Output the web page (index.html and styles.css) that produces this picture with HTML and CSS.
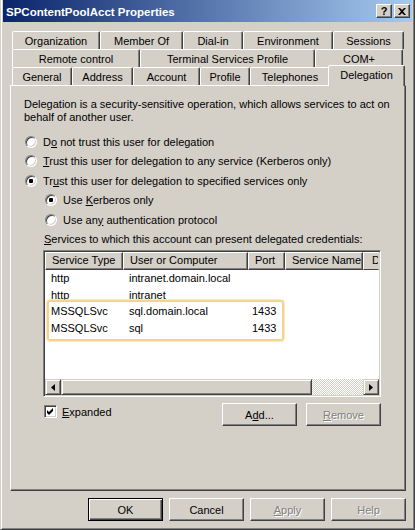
FILE: index.html
```html
<!DOCTYPE html>
<html>
<head>
<meta charset="utf-8">
<title>SPContentPoolAcct Properties</title>
<link rel="stylesheet" href="styles.css">
</head>
<body>
<div class="window">
  <div class="titlebar">
    <span class="title">SPContentPoolAcct Properties</span>
    <span class="caption-btns">
      <span class="cbtn">?</span>
      <span class="cbtn"><svg width="8" height="7" viewBox="0 0 8 7"><path d="M0 0h2l2 2 2-2h2L5 3.5 8 7H6L4 5 2 7H0l3-3.5z" fill="#000"/></svg></span>
    </span>
  </div>
  <div class="client">
    <div class="tabs">
      <div class="tabrow row1">
        <div class="tab">Organization</div>
        <div class="tab">Member Of</div>
        <div class="tab">Dial-in</div>
        <div class="tab">Environment</div>
        <div class="tab">Sessions</div>
      </div>
      <div class="tabrow row2">
        <div class="tab">Remote control</div>
        <div class="tab">Terminal Services Profile</div>
        <div class="tab">COM+</div>
      </div>
      <div class="tabrow row3">
        <div class="tab">General</div>
        <div class="tab">Address</div>
        <div class="tab">Account</div>
        <div class="tab">Profile</div>
        <div class="tab">Telephones</div>
        <div class="tab selected">Delegation</div>
      </div>
    </div>
    <div class="page">
      <p class="intro">Delegation is a security-sensitive operation, which allows services to act on behalf of another user.</p>
      <div class="options">
        <div class="opt"><span class="radio"></span><span>D<u>o</u> not trust this user for delegation</span></div>
        <div class="opt"><span class="radio"></span><span><u>T</u>rust this user for delegation to any service (Kerberos only)</span></div>
        <div class="opt"><span class="radio on"></span><span>Tr<u>u</u>st this user for delegation to specified services only</span></div>
        <div class="opt sub"><span class="radio on"></span><span>Use <u>K</u>erberos only</span></div>
        <div class="opt sub"><span class="radio"></span><span>Use an<u>y</u> authentication protocol</span></div>
      </div>
      <div class="svc-label"><u>S</u>ervices to which this account can present delegated credentials:</div>
      <div class="listbox">
        <div class="lv-header">
          <div class="hcell">Service Type</div>
          <div class="hcell">User or Computer</div>
          <div class="hcell">Port</div>
          <div class="hcell">Service Name</div>
          <div class="hcell last">D</div>
        </div>
        <div class="lv-body">
          <div class="lv-row"><span>http</span><span>intranet.domain.local</span><span></span><span></span><span></span></div>
          <div class="lv-row"><span>http</span><span>intranet</span><span></span><span></span><span></span></div>
          <div class="lv-row"><span>MSSQLSvc</span><span>sql.domain.local</span><span class="num">1433</span><span></span><span></span></div>
          <div class="lv-row"><span>MSSQLSvc</span><span>sql</span><span class="num">1433</span><span></span><span></span></div>
          <div class="highlight"></div>
        </div>
        <div class="hscroll">
          <div class="sb-btn"><svg width="4" height="7" viewBox="0 0 4 7"><path d="M4 0v7L0 3.5z" fill="#000"/></svg></div>
          <div class="sb-thumb"></div>
          <div class="sb-track"></div>
          <div class="sb-btn"><svg width="4" height="7" viewBox="0 0 4 7"><path d="M0 0v7l4-3.5z" fill="#000"/></svg></div>
        </div>
      </div>
      <div class="below-list">
        <div class="check"><span class="checkbox"><svg width="7" height="7" viewBox="0 0 7 7"><path d="M0 2l2 2 4-4v3L2 7 0 5z" fill="#000"/></svg></span><span><u>E</u>xpanded</span></div>
        <div class="actions">
          <span class="btn">A<u>d</u>d...</span>
          <span class="btn disabled"><u>R</u>emove</span>
        </div>
      </div>
    </div>
    <div class="buttons">
      <span class="btn default">OK</span>
      <span class="btn">Cancel</span>
      <span class="btn disabled"><u>A</u>pply</span>
      <span class="btn disabled">Help</span>
    </div>
  </div>
</div>
</body>
</html>
```

FILE: styles.css
```css
* { box-sizing: border-box; }
html, body { margin: 0; padding: 0; }
body {
  width: 415px;
  height: 530px;
  overflow: hidden;
  background: #d4d0c8;
  font-family: "Liberation Sans", Arial, sans-serif;
  font-size: 11px;
  color: #000;
}
u { text-decoration: underline; text-underline-offset: 1px; }

.window {
  width: 415px;
  height: 530px;
  background: #d4d0c8;
  border-left: 1px solid #d4d0c8;
  border-right: 1px solid #404040;
  border-bottom: 1px solid #404040;
  box-shadow: inset 1px 0 #fff, inset -1px -1px #808080;
  padding: 0 2px 2px 2px;
}

.titlebar {
  height: 22px;
  display: flex;
  align-items: center;
  justify-content: space-between;
  background: linear-gradient(to right, #0a246a, #a6caf0);
  padding: 0 2px 0 3px;
}
.title {
  color: #fff;
  font-weight: bold;
  font-size: 11.5px;
  padding-top: 1px;
  white-space: nowrap;
}
.caption-btns { display: flex; gap: 2px; }
.cbtn {
  width: 16px;
  height: 14px;
  display: flex;
  align-items: center;
  justify-content: center;
  background: #d4d0c8;
  border: 1px solid;
  border-color: #fff #404040 #404040 #fff;
  box-shadow: inset -1px -1px #808080;
  font-weight: bold;
  font-size: 11px;
  line-height: 12px;
}

.client { padding: 0 6px 0 7px; }

.tabs { display: flex; flex-direction: column; margin-top: 9px; }
.tabrow { display: grid; height: 18px; margin-left: 2px; }
.row1 { grid-template-columns: 88px 83px 60px 90px 71px; }
.row2 { grid-template-columns: 128px 175px 88px; }
.row3 { grid-template-columns: 60px 61px 67px 50px 80px 73px; }
.tab {
  background: #d4d0c8;
  border: 1px solid;
  border-bottom: 0;
  border-color: #fff #404040 transparent #fff;
  box-shadow: inset -1px 0 #808080;
  border-radius: 2px 2px 0 0;
  text-align: center;
  padding-top: 2px;
  line-height: 14px;
  white-space: nowrap;
}
.tab.selected {
  margin: -2px -2px -1px -2px;
  z-index: 1;
}

.page {
  height: 406px;
  border: 1px solid;
  border-color: #fff #404040 #404040 #fff;
  box-shadow: inset -1px -1px #808080;
  padding: 12px 10px 0 13px;
}
.intro { margin: 0; line-height: 13px; }

.options { margin-top: 8px; }
.opt { display: flex; align-items: center; height: 19.5px; white-space: nowrap; }
.opt.sub { padding-left: 20px; }
.radio {
  width: 12px;
  height: 12px;
  flex: none;
  margin: 0 6px 0 1px;
  border-radius: 50%;
  background: #fff;
  border: 1px solid;
  border-color: #808080 #fff #fff #808080;
  box-shadow: inset 1px 1px #404040, inset -1px -1px #d4d0c8;
  display: flex;
  align-items: center;
  justify-content: center;
}
.radio.on::after {
  content: "";
  width: 4px;
  height: 4px;
  border-radius: 1px;
  background: #000;
}

.svc-label { margin: 3px 0 0 20px; line-height: 13px; white-space: nowrap; }

.listbox {
  margin: 4.5px 0 0 19px;
  width: 338px;
  height: 147px;
  background: #fff;
  border: 1px solid;
  border-color: #808080 #fff #fff #808080;
  box-shadow: inset 1px 1px #404040, inset -1px -1px #d4d0c8;
  padding: 1px;
  display: flex;
  flex-direction: column;
}
.lv-header {
  display: grid;
  grid-template-columns: 78px 125px 37px 78px 1fr;
  height: 18px;
  flex: none;
  background: #d4d0c8;
}
.hcell {
  border: 1px solid;
  border-color: #fff #404040 #404040 #fff;
  box-shadow: inset -1px -1px #808080;
  padding-left: 6px;
  line-height: 15px;
  white-space: nowrap;
  overflow: hidden;
}
.hcell.last {
  padding-left: 8px;
  border-right-color: #d4d0c8;
  box-shadow: none;
}
.lv-body {
  position: relative;
  height: 109px;
  flex: none;
  overflow: hidden;
}
.lv-row {
  display: grid;
  grid-template-columns: 78px 125px 37px 78px 1fr;
  height: 16.67px;
  line-height: 16.67px;
  white-space: nowrap;
}
.lv-row span { padding-left: 6px; overflow: hidden; }
.lv-row .num { padding-left: 4px; }
.highlight {
  position: absolute;
  left: 2px;
  top: 30px;
  width: 237px;
  height: 41px;
  border: 2px solid #f2d48c;
  border-radius: 3px;
  box-shadow: 0 0 1px 1px rgba(245, 218, 155, 0.6);
}

.hscroll { display: flex; height: 16px; flex: none; }
.sb-btn, .sb-thumb {
  background: #d4d0c8;
  border: 1px solid;
  border-color: #d4d0c8 #404040 #404040 #d4d0c8;
  box-shadow: inset 1px 1px #fff, inset -1px -1px #808080;
}
.sb-btn {
  width: 16px;
  flex: none;
  display: flex;
  align-items: center;
  justify-content: center;
}
.sb-thumb { width: 251px; flex: none; }
.sb-track {
  flex: 1;
  background: repeating-conic-gradient(#fff 0 25%, #d4d0c8 0 50%) 0 0 / 2px 2px;
}

.below-list {
  display: flex;
  align-items: flex-start;
  width: 338px;
  margin: 6px 0 0 19px;
}
.check { display: flex; align-items: center; gap: 5px; margin: 2px 0 0 1px; }
.checkbox {
  width: 13px;
  height: 13px;
  background: #fff;
  border: 1px solid;
  border-color: #808080 #fff #fff #808080;
  box-shadow: inset 1px 1px #404040, inset -1px -1px #d4d0c8;
  display: flex;
  align-items: center;
  justify-content: center;
}
.actions { margin-left: auto; display: flex; gap: 9px; }

.btn {
  width: 75px;
  height: 23px;
  display: flex;
  align-items: center;
  justify-content: center;
  background: #d4d0c8;
  border: 1px solid;
  border-color: #fff #404040 #404040 #fff;
  box-shadow: inset -1px -1px #808080;
  white-space: nowrap;
}
.btn.default {
  border-color: #000;
  box-shadow: inset 1px 1px #fff, inset -1px -1px #404040, inset -2px -2px #808080;
}
.btn.disabled { color: #808080; text-shadow: 1px 1px #fff; }

.buttons {
  display: flex;
  justify-content: flex-end;
  gap: 6px;
  margin-top: 7px;
}
```
